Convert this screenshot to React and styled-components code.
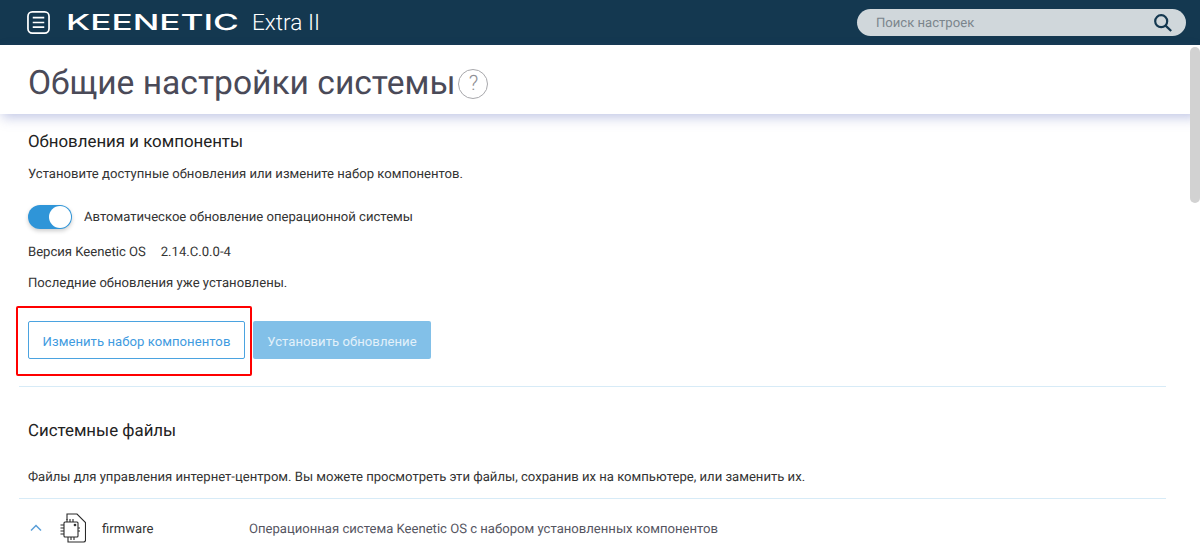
import React from "react";
import styled, { createGlobalStyle } from "styled-components";

const GlobalStyle = createGlobalStyle`
  html, body {
    margin: 0;
    height: 100%;
    overflow: hidden;
    background: #fff;
    font-family: Roboto, "Liberation Sans", sans-serif;
    text-rendering: geometricPrecision;
  }
`;

export default function App() {
  return (
    <Page>
      <GlobalStyle />
      <Header>
        <HeaderLeft>
          <MenuIcon viewBox="0 0 24 24">
            <rect x="1" y="1" width="22" height="22" rx="4.5" />
            <path d="M6 7h12M6 12h12M6 16.8h12" />
          </MenuIcon>
          <LogoBox>
            <Logo>KEENETIC</Logo>
          </LogoBox>
          <Model>Extra II</Model>
        </HeaderLeft>
        <Search>
          <SearchText>Поиск настроек</SearchText>
          <SearchIcon viewBox="0 0 18 18">
            <circle cx="7.2" cy="7.2" r="6" />
            <path d="M11.6 11.6L17.2 17" />
          </SearchIcon>
        </Search>
      </Header>

      <TitleBar>
        <Title>Общие настройки системы</Title>
        <Help>?</Help>
      </TitleBar>

      <Scrollbar />

      <Content>
        <Section>
          <SectionTitle>Обновления и компоненты</SectionTitle>
          <Text $top={14}>Установите доступные обновления или измените набор компонентов.</Text>
          <ToggleRow>
            <Toggle />
            <ToggleLabel>Автоматическое обновление операционной системы</ToggleLabel>
          </ToggleRow>
          <VersionRow>
            <Text>Версия Keenetic OS</Text>
            <Text>2.14.C.0.0-4</Text>
          </VersionRow>
          <Text $top={13}>Последние обновления уже установлены.</Text>
          <Buttons>
            <Highlight>
              <OutlineButton>Изменить набор компонентов</OutlineButton>
            </Highlight>
            <FilledButton>Установить обновление</FilledButton>
          </Buttons>
        </Section>

        <Section $line>
          <SectionTitle>Системные файлы</SectionTitle>
          <Text $top={28}>
            Файлы для управления интернет-центром. Вы можете просмотреть эти файлы, сохранив их на компьютере, или заменить их.
          </Text>
          <FileRow>
            <Chevron viewBox="0 0 12 8">
              <path d="M1 6.5L6 1.5L11 6.5" />
            </Chevron>
            <ChipIcon viewBox="0 0 26 30">
              <path d="M7 7V1h10l8.5 8.5V27a2 2 0 0 1-2 2H8v-2" />
              <rect x="4" y="9" width="14" height="15" rx="1" />
              <circle cx="15" cy="12" r="0.8" />
              <path d="M0.5 12h3.5M0.5 15h3.5M0.5 18h3.5M0.5 21h3.5M18 15h2M18 18h2M7 6v3M10 6v3M13 6v3M8 24v3M11 24v3M14 24v3" />
            </ChipIcon>
            <FileName>firmware</FileName>
            <FileInfo>Операционная система Keenetic OS с набором установленных компонентов</FileInfo>
          </FileRow>
        </Section>
      </Content>
    </Page>
  );
}

const Page = styled.div`
  position: relative;
  width: 1200px;
  height: 557px;
  overflow: hidden;
  background: #fff;
`;

const Header = styled.header`
  display: flex;
  align-items: center;
  justify-content: space-between;
  height: 45px;
  padding: 0 14px 0 27px;
  box-sizing: border-box;
  background: #143850;
`;

const HeaderLeft = styled.div`
  display: flex;
  align-items: center;
`;

const MenuIcon = styled.svg`
  width: 23px;
  height: 23px;
  fill: none;
  stroke: #fff;
  stroke-width: 1.8;
`;

const LogoBox = styled.div`
  width: 169px;
  margin-left: 16px;
  overflow: visible;
`;

const Logo = styled.span`
  display: inline-block;
  font-family: Inter, sans-serif;
  font-size: 22px;
  font-weight: 500;
  line-height: 24px;
  color: #fff;
  transform: scaleX(1.6);
  transform-origin: left center;
`;

const Model = styled.span`
  margin-left: 17px;
  font-size: 22.6px;
  font-weight: 300;
  color: #fff;
`;

const Search = styled.div`
  display: flex;
  align-items: center;
  justify-content: space-between;
  width: 329px;
  height: 27px;
  padding: 0 14px 0 19px;
  box-sizing: border-box;
  border-radius: 14px;
  background: #d0d7db;
`;

const SearchText = styled.span`
  padding-top: 2px;
  font-size: 13.1px;
  color: #7b858c;
`;

const SearchIcon = styled.svg`
  width: 18px;
  height: 18px;
  fill: none;
  stroke: #143850;
  stroke-width: 2.2;
`;

const TitleBar = styled.div`
  display: flex;
  align-items: center;
  height: 69px;
  padding: 8px 0 0 28px;
  box-sizing: border-box;
  background: #fff;
  box-shadow: 0 5px 12px -2px rgba(90, 105, 185, 0.4);
`;

const Title = styled.h1`
  margin: 0;
  font-size: 33.6px;
  font-weight: 400;
  color: #4a4a58;
`;

const Help = styled.span`
  display: flex;
  align-items: center;
  justify-content: center;
  width: 30px;
  height: 30px;
  margin-left: 3px;
  box-sizing: border-box;
  border: 1.5px solid #a8a8ac;
  border-radius: 50%;
  font-size: 21px;
  font-weight: 300;
  color: #8f8f95;
`;

const Scrollbar = styled.div`
  position: absolute;
  top: 47px;
  right: 0;
  width: 10px;
  height: 156px;
  border-radius: 5px;
  background: #d2d2d2;
`;

const Content = styled.main`
  padding: 0 34px 0 28px;
`;

const Section = styled.section`
  padding-top: ${(p) => (p.$line ? "34px" : "18px")};
  margin-left: ${(p) => (p.$line ? "-9px" : "0")};
  padding-left: ${(p) => (p.$line ? "9px" : "0")};
  border-top: ${(p) => (p.$line ? "1px solid #d7ebf7" : "none")};
`;

const SectionTitle = styled.h2`
  margin: 0;
  font-size: 16.85px;
  font-weight: 400;
  line-height: 20px;
  color: #222;
`;

const Text = styled.div`
  margin-top: ${(p) => p.$top || 0}px;
  font-size: 13.1px;
  line-height: 18px;
  color: #333;
`;

const ToggleRow = styled.div`
  display: flex;
  align-items: center;
  gap: 12px;
  margin-top: 21px;
`;

const ToggleLabel = styled(Text)`
  padding-top: 2px;
`;

const Toggle = styled.span`
  position: relative;
  display: block;
  width: 44px;
  height: 24px;
  border-radius: 12px;
  background: #2f95d8;
  box-shadow: 0 2px 4px rgba(0, 0, 0, 0.2);

  &::after {
    content: "";
    position: absolute;
    top: 1px;
    right: 1px;
    width: 22px;
    height: 22px;
    border-radius: 50%;
    background: #fff;
  }
`;

const VersionRow = styled.div`
  display: flex;
  gap: 15px;
  margin-top: 15px;
`;

const Buttons = styled.div`
  display: flex;
  gap: 8px;
  margin: 28px 0 27px;
`;

const Highlight = styled.div`
  position: relative;

  &::after {
    content: "";
    position: absolute;
    inset: -15px -7px -17px -12px;
    border: 2.5px solid #ff0000;
    border-radius: 2px;
    pointer-events: none;
  }
`;

const BaseButton = styled.button`
  display: block;
  height: 38px;
  padding: 2px 0 0;
  border-radius: 2px;
  font-family: Roboto, sans-serif;
  font-size: 13.1px;
  letter-spacing: 0.05px;
  white-space: nowrap;
`;

const OutlineButton = styled(BaseButton)`
  width: 217px;
  border: 1px solid #4ba3e0;
  background: #fff;
  color: #3f9be0;
`;

const FilledButton = styled(BaseButton)`
  width: 178px;
  border: none;
  background: #82c0e8;
  color: #e3f1fa;
`;

const FileRow = styled.div`
  display: flex;
  align-items: center;
  margin: 11px 0 0 -9px;
  padding: 14px 0 0 11px;
  border-top: 1px solid #d7ebf7;
`;

const Chevron = styled.svg`
  width: 12px;
  height: 8px;
  fill: none;
  stroke: #5a9fd8;
  stroke-width: 1.5;
`;

const ChipIcon = styled.svg`
  width: 26px;
  height: 30px;
  margin-left: 18px;
  fill: none;
  stroke: #2a2a2a;
  stroke-width: 1.1;
`;

const FileName = styled.span`
  width: 147px;
  margin-left: 16px;
  padding-top: 3px;
  font-size: 13.1px;
  color: #333;
`;

const FileInfo = styled.span`
  padding-top: 3px;
  font-size: 13.1px;
  color: #55555f;
`;
